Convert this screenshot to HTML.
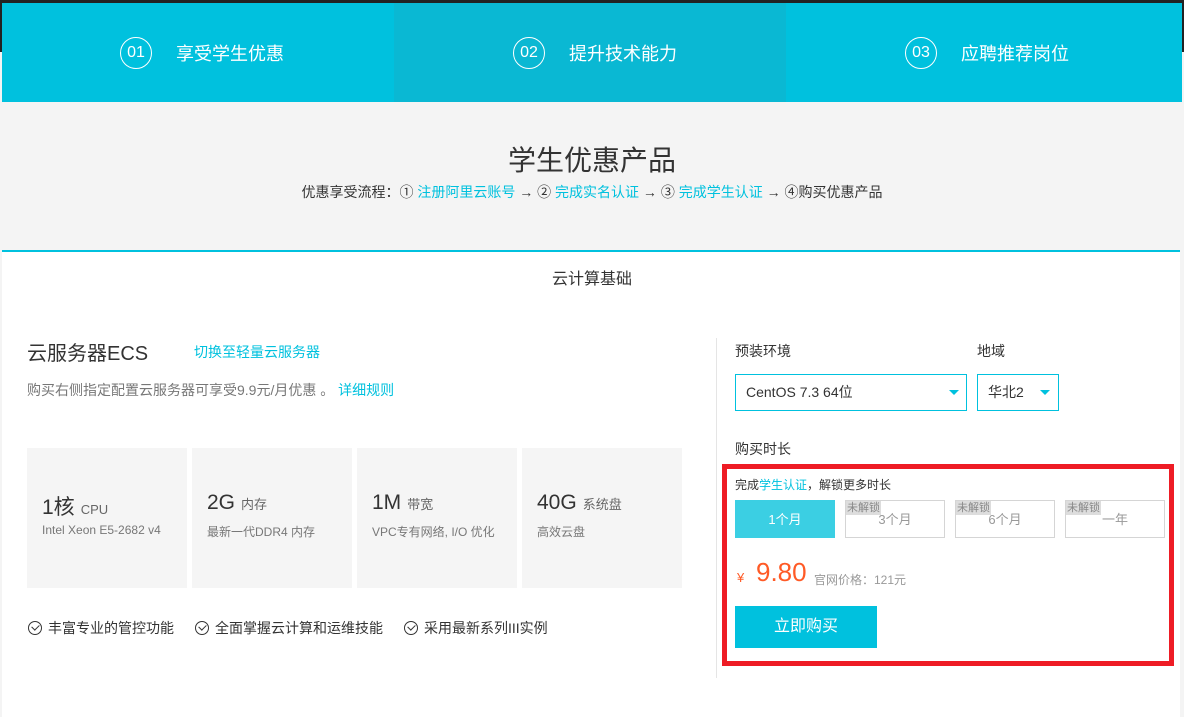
<!DOCTYPE html>
<html><head><meta charset="utf-8"><style>
*{margin:0;padding:0;box-sizing:border-box}
body{width:1184px;height:717px;overflow:hidden;background:#f4f4f4;font-family:"Liberation Sans","Noto Sans CJK SC",sans-serif;position:relative;color:#333}
.a{position:absolute;white-space:nowrap}
.c{color:#00c1de}
.circ{position:absolute;width:32px;height:32px;border:1px solid #fff;border-radius:50%;color:#fff;font-size:16px;text-align:center;line-height:30px}
.tab{position:absolute;top:3px;height:99px;background:#00c1de}
.tt{position:absolute;top:40px;color:#fff;font-size:18px}
.card{position:absolute;top:448px;width:160px;height:140px;background:#f5f5f5}
.card .b{position:absolute;left:15px;top:43px;font-size:21px;color:#333}
.card .b span{font-size:13px;color:#666;margin-left:6px}
.card .s{position:absolute;left:15px;top:75px;font-size:12px;color:#777}
.chk{display:inline-block;width:14px;height:14px;border:1px solid #333;border-radius:50%;vertical-align:-2px;margin-right:6px;position:relative}
.chk:after{content:"";position:absolute;left:3px;top:2px;width:6px;height:4px;border-left:1px solid #333;border-bottom:1px solid #333;transform:rotate(-45deg)}
.opt{position:absolute;top:500px;width:100px;height:38px;border:1px solid #d5d5d5;color:#999;font-size:13px;text-align:center;line-height:38px;background:#fff}
.opt i{position:absolute;left:0;top:0;background:#ddd;color:#888;font-style:normal;font-size:11px;line-height:14px;padding:0 1px}
.sel{position:absolute;top:374px;height:37px;border:1px solid #00c1de;background:#fff;font-size:14px;line-height:35px;padding-left:10px;color:#333}
.tri{position:absolute;top:15px;width:0;height:0;border-left:5px solid transparent;border-right:5px solid transparent;border-top:5px solid #00c1de}
</style></head><body>
<div class="a" style="left:0;top:0;width:1184px;height:52px;background:#222"></div>
<div class="tab" style="left:2px;width:392px"></div>
<div class="tab" style="left:394px;width:392px;background:#0ab8d3"></div>
<div class="tab" style="left:786px;width:396px"></div>
<div class="circ" style="left:120px;top:37px">01</div><div class="tt" style="left:176px">享受学生优惠</div>
<div class="circ" style="left:513px;top:37px">02</div><div class="tt" style="left:569px">提升技术能力</div>
<div class="circ" style="left:905px;top:37px">03</div><div class="tt" style="left:961px">应聘推荐岗位</div>

<div class="a" style="left:0;width:1184px;top:139px;text-align:center;font-size:28px;color:#333">学生优惠产品</div>
<div class="a" style="left:0;width:1184px;top:182px;text-align:center;font-size:14px;color:#333">优惠享受流程：① <span class="c">注册阿里云账号</span> → ② <span class="c">完成实名认证</span> → ③ <span class="c">完成学生认证</span> → ④购买优惠产品</div>

<div class="a" style="left:2px;top:250px;width:1178px;height:467px;background:#fff;border-top:2px solid #00c1de"></div>
<div class="a" style="left:0;width:1184px;top:265px;text-align:center;font-size:16px;color:#333">云计算基础</div>

<div class="a" style="left:27px;top:337px;font-size:20px;color:#333">云服务器ECS</div>
<div class="a c" style="left:194px;top:342px;font-size:14px">切换至轻量云服务器</div>
<div class="a" style="left:27px;top:380px;font-size:14px;color:#777">购买右侧指定配置云服务器可享受9.9元/月优惠 。 <span class="c">详细规则</span></div>

<div class="card" style="left:27px"><div class="b">1核<span>CPU</span></div><div class="s">Intel Xeon E5-2682 v4</div></div>
<div class="card" style="left:192px"><div class="b">2G<span>内存</span></div><div class="s">最新一代DDR4 内存</div></div>
<div class="card" style="left:357px"><div class="b">1M<span>带宽</span></div><div class="s">VPC专有网络, I/O 优化</div></div>
<div class="card" style="left:522px"><div class="b">40G<span>系统盘</span></div><div class="s">高效云盘</div></div>

<div class="a" style="left:28px;top:618px;font-size:14px"><span class="chk"></span>丰富专业的管控功能</div>
<div class="a" style="left:195px;top:618px;font-size:14px"><span class="chk"></span>全面掌握云计算和运维技能</div>
<div class="a" style="left:404px;top:618px;font-size:14px"><span class="chk"></span>采用最新系列III实例</div>

<div class="a" style="left:716px;top:338px;width:1px;height:340px;background:#e5e5e5"></div>
<div class="a" style="left:735px;top:341px;font-size:14px">预装环境</div>
<div class="a" style="left:977px;top:341px;font-size:14px">地域</div>
<div class="sel" style="left:735px;width:232px">CentOS 7.3 64位<div class="tri" style="left:213px"></div></div>
<div class="sel" style="left:977px;width:82px">华北2<div class="tri" style="left:62px"></div></div>
<div class="a" style="left:735px;top:439px;font-size:14px">购买时长</div>

<div class="a" style="left:722px;top:464px;width:452px;height:202px;border:5px solid #ee1c25"></div>
<div class="a" style="left:735px;top:476px;font-size:12px">完成<span class="c">学生认证</span>，解锁更多时长</div>
<div class="opt" style="left:735px;background:#3bcfe3;border-color:#3bcfe3;color:#fff">1个月</div>
<div class="opt" style="left:845px"><i>未解锁</i>3个月</div>
<div class="opt" style="left:955px"><i>未解锁</i>6个月</div>
<div class="opt" style="left:1065px"><i>未解锁</i>一年</div>
<div class="a" style="left:737px;top:570px;font-size:13px;color:#ff5a26">¥</div>
<div class="a" style="left:756px;top:557px;font-size:26px;color:#ff5a26">9.80</div>
<div class="a" style="left:814px;top:571px;font-size:12px;color:#999">官网价格：121元</div>
<div class="a" style="left:735px;top:606px;width:142px;height:42px;background:#00c1de;color:#fff;font-size:16px;text-align:center;line-height:42px">立即购买</div>
</body></html>
